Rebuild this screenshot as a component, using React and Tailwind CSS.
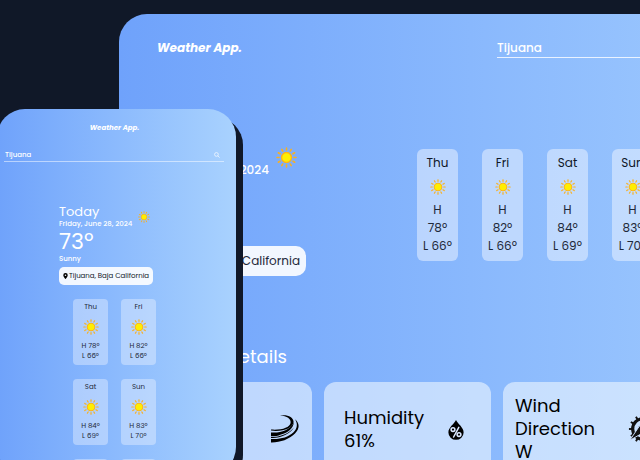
import React from "react";

const FORECAST = [
  { day: "Thu", high: "78º", low: "66º" },
  { day: "Fri", high: "82º", low: "66º" },
  { day: "Sat", high: "84º", low: "69º" },
  { day: "Sun", high: "83º", low: "70º" },
];

const PHONE_FORECAST = [
  ...FORECAST,
  { day: "Mon", high: "81º", low: "68º" },
  { day: "Tue", high: "80º", low: "67º" },
];

const RAYS = [0, 30, 60, 90, 120, 150, 180, 210, 240, 270, 300, 330];

function SunIcon({ className }) {
  return (
    <svg viewBox="0 0 32 32" className={className} aria-hidden="true">
      <g stroke="#f9b021" strokeWidth="2.4" strokeLinecap="round">
        {RAYS.map((angle) => (
          <line key={angle} x1="16" y1="1.6" x2="16" y2="4.6" transform={`rotate(${angle} 16 16)`} />
        ))}
      </g>
      <circle cx="16" cy="16" r="7.6" fill="#ffee00" stroke="#fdb515" strokeWidth="2.2" />
    </svg>
  );
}

function WindIcon({ className }) {
  return (
    <svg viewBox="0 0 28 30" className={className} fill="currentColor" aria-hidden="true">
      <path d="M9 1.600C16 .2 22.500 3 22.600 8C22 14 12 18 0 16.600V15.600C11 16.400 18.500 13.500 19.600 9C20.200 5 16 2 9 1.600Z" />
      <path d="M22.800 8.500C22.500 14 17 19 10 20.600C6 22.400 3 22.400 0 22.300V18.400C8 19.400 19 16.500 22.800 8.500Z" />
      <path d="M23 13.500C19 20 9 24.500 0 23.900V23.100C9 23.200 18 19.500 23 13.500Z" />
      <path d="M24 5.200C28.600 9 29 14.500 24 19.500C18 25.500 9 28.600 0 28.400V25C9 25.600 17 23.500 22.300 18.600C26.300 14.600 27 9.800 24 5.200Z" />
    </svg>
  );
}

function HumidityIcon({ className }) {
  return (
    <svg viewBox="0 0 16 20" className={className} aria-hidden="true">
      <path d="M8 0C10 4 15.600 7.500 15.600 12.400A7.600 7.400 0 0 1 .4 12.400C.4 7.500 6 4 8 0Z" fill="#000" />
      <g fill="none" stroke="#dbe8ff" strokeWidth="1.500" strokeLinecap="round">
        <circle cx="5" cy="9.600" r="1.900" />
        <circle cx="11" cy="14.600" r="1.900" />
        <path d="M10.800 7.400L5.600 17" />
      </g>
    </svg>
  );
}

function CompassIcon({ className }) {
  return (
    <svg viewBox="0 0 32 32" className={className} aria-hidden="true">
      <circle cx="16" cy="16" r="11" fill="none" stroke="#111" strokeWidth="3.400" />
      <g stroke="#111" strokeWidth="2">
        {RAYS.map((angle) => (
          <line key={angle} x1="16" y1="1" x2="16" y2="5" transform={`rotate(${angle} 16 16)`} />
        ))}
      </g>
      <path d="M2 28L12 13L26 5L18 19Z" fill="#111" stroke="#cfe1ff" />
    </svg>
  );
}

function PinIcon({ className }) {
  return (
    <svg viewBox="0 0 12 16" className={className} aria-hidden="true">
      <path fillRule="evenodd" d="M6 0a6 6 0 0 1 6 6c0 4-6 10-6 10S0 10 0 6a6 6 0 0 1 6-6Zm0 3.800a2.200 2.200 0 1 0 0 4.400a2.200 2.200 0 0 0 0-4.400Z" />
    </svg>
  );
}

function SearchIcon({ className }) {
  return (
    <svg viewBox="0 0 16 16" className={className} fill="none" stroke="currentColor" strokeWidth="2" aria-hidden="true">
      <circle cx="6.500" cy="6.500" r="5" />
      <path d="M10 10l5 5" />
    </svg>
  );
}

function DetailCard({ label, value, padding, children }) {
  return (
    <article className={`flex h-32 w-[167px] shrink-0 justify-between rounded-xl bg-blue-50/60 text-black ${padding}`}>
      <p className="text-lg leading-[23px]">
        {label}
        <br />
        {value}
      </p>
      {children}
    </article>
  );
}

function DesktopPreview() {
  return (
    <section className="ml-[119px] mt-3.5 h-[600px] w-[760px] overflow-hidden rounded-[28px] bg-linear-to-r from-[#6fa2fb] to-[#a8d1fe] pl-[26px] text-white">
      <header className="flex h-[135px] items-start pl-3 pt-6">
        <h1 className="w-[340px] text-xs font-bold italic leading-5">Weather App.</h1>
        <input
          aria-label="Search city"
          defaultValue="Tijuana"
          className="h-5 w-60 border-b border-white/80 bg-transparent text-xs font-medium outline-none"
        />
      </header>

      <div className="flex h-[196px]">
        <div className="flex w-[272px] flex-col items-start gap-[67px]">
          <div className="flex w-[152px] justify-between">
            <p className="mt-3 w-[124px] whitespace-nowrap text-right text-xs font-medium leading-[18px]">June 28, 2024</p>
            <SunIcon className="-mt-0.5 size-[21px] shrink-0" />
          </div>
          <p className="flex h-[30px] w-[161px] items-center justify-end whitespace-nowrap rounded-[10px] bg-white/90 pr-1.5 text-xs text-gray-800">
            Baja California
          </p>
        </div>
        <ul className="flex gap-6">
          {FORECAST.map(({ day, high, low }) => (
            <li key={day} className="flex h-28 w-[41px] flex-col items-center rounded-md bg-blue-50/50 pt-1 text-xs leading-[18px] text-gray-800">
              <h3 className="leading-5 text-gray-900">{day}</h3>
              <SunIcon className="my-1.5 size-4" />
              <p className="text-center">
                H
                <br />
                {high}
              </p>
              <p className="whitespace-nowrap">L {low}</p>
            </li>
          ))}
        </ul>
      </div>

      <h2 className="w-[142px] text-right text-lg leading-6">Details</h2>
      <div className="mt-[13px] flex gap-3">
        <DetailCard label="Wind" value="8 mph" padding="pl-5 pr-[13px] pt-6">
          <WindIcon className="mt-2 h-[30px] w-7" />
        </DetailCard>
        <DetailCard label="Humidity" value="61%" padding="pl-5 pr-[27px] pt-6">
          <HumidityIcon className="mt-3.5 h-5 w-4" />
        </DetailCard>
        <DetailCard label="Wind Direction" value="W" padding="px-3 pt-3">
          <CompassIcon className="mt-5 size-[30px] shrink-0" />
        </DetailCard>
      </div>
    </section>
  );
}

function PhonePreview() {
  return (
    <section className="absolute -left-[3px] top-[109px] h-[366px] w-[239px] overflow-hidden rounded-[28px] bg-linear-to-r from-[#6fa2fb] to-[#a9d2fe] text-white">
      <h1 className="pr-1 pt-3 text-center text-[7px] font-bold italic leading-3.5">Weather App.</h1>
      <div className="ml-[7px] mr-3 mt-3.5 flex h-[13px] items-center border-b border-white/50 pr-1">
        <input aria-label="Search" defaultValue="Tijuana" className="w-full bg-transparent pl-px text-[7px] font-medium leading-3 outline-none" />
        <button type="button" aria-label="Search" className="opacity-90">
          <SearchIcon className="size-1.5" />
        </button>
      </div>

      <div className="ml-[62px] mt-[42px]">
        <div className="flex items-center gap-1.5">
          <div>
            <h2 className="text-[13px] leading-[15px]">Today</h2>
            <p className="whitespace-nowrap text-[7px] font-medium leading-2.5">Friday, June 28, 2024</p>
          </div>
          <SunIcon className="size-3 shrink-0" />
        </div>
        <p className="text-[22px] leading-[26px]">73º</p>
        <p className="text-[7px] font-medium leading-2">Sunny</p>
        <p className="mt-1 flex h-[18px] w-[94px] items-center justify-center gap-px whitespace-nowrap rounded-[5px] bg-white/90 text-[7px] text-gray-900">
          <PinIcon className="h-1.5 w-[5px]" />
          Tijuana, Baja California
        </p>
      </div>

      <ul className="ml-[76px] mt-3.5 grid w-[83px] grid-cols-2 gap-x-[13px] gap-y-3.5">
        {PHONE_FORECAST.map(({ day, high, low }) => (
          <li key={day} className="flex h-[66px] flex-col items-center rounded bg-blue-50/40 pt-1 text-[7px] leading-2.5 text-gray-800">
            <h3 className="leading-2">{day}</h3>
            <SunIcon className="mb-1.5 mt-2 size-4" />
            <p>H {high}</p>
            <p>L {low}</p>
          </li>
        ))}
      </ul>
    </section>
  );
}

export default function App() {
  return (
    <main className="relative flex h-screen items-start overflow-hidden bg-gray-900 font-['Poppins',Inter,sans-serif]">
      <div className="shrink-0">
        <DesktopPreview />
      </div>
      <div className="absolute left-1 top-[117px] h-[366px] w-[239px] rounded-[28px] bg-gray-900" />
      <PhonePreview />
    </main>
  );
}
